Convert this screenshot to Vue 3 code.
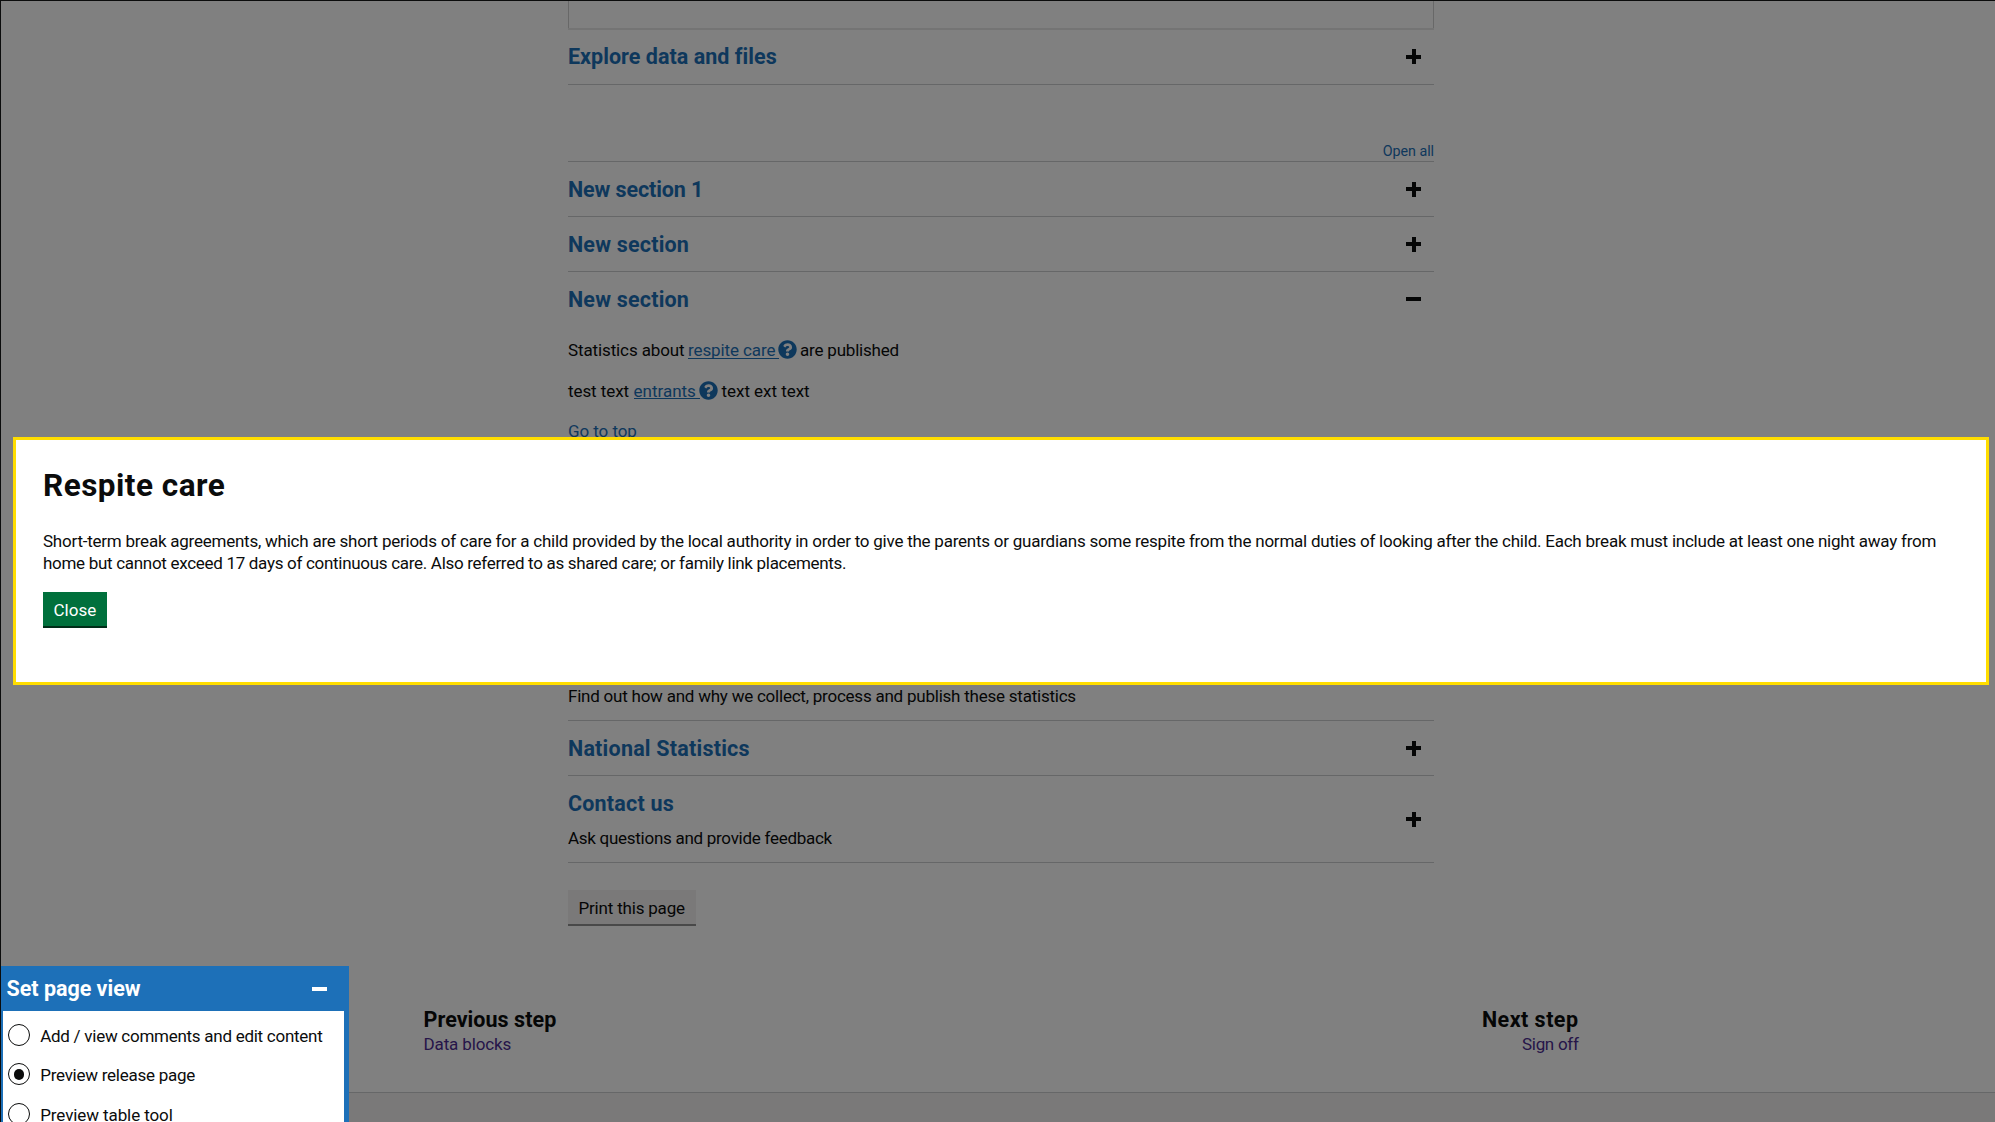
<script setup>
const views = [
  { label: 'Add / view comments and edit content', cls: 'edit', checked: false },
  { label: 'Preview release page', cls: 'release', checked: true },
  { label: 'Preview table tool', cls: 'table', checked: false },
]
</script>

<template>
  <div class="page">
    <main class="content">
      <div class="box"></div>

      <section class="row explore">
        <h2 class="ls-explore">Explore data and files</h2>
        <i class="icon plus"></i>
      </section>

      <a class="open-all">Open all</a>

      <section class="row">
        <h2 class="ls-one">New section 1</h2>
        <i class="icon plus"></i>
      </section>
      <section class="row">
        <h2 class="ls-section">New section</h2>
        <i class="icon plus"></i>
      </section>
      <section class="row">
        <h2 class="ls-section">New section</h2>
        <i class="icon"></i>
      </section>

      <div class="body">
        <p>
          <span class="ls-stats">Statistics about</span>
          <a class="term care">respite care</a>
          <svg class="help" viewBox="0 0 512 512"><path d="M504 256c0 137-111 248-248 248S8 393 8 256 119 8 256 8s248 111 248 248zM262.700 90c-54.500 0-89.300 23-116.500 63.800-3.500 5.300-2.400 12.400 2.700 16.300l34.700 26.300c5.200 3.900 12.600 3 16.700-2.100 17.900-22.700 30.100-35.800 57.300-35.800 20.400 0 45.700 13.100 45.700 33 0 15-12.400 22.700-32.500 34C247.100 238.500 216 254.900 216 296v4c0 6.600 5.400 12 12 12h56c6.600 0 12-5.400 12-12v-1.300c0-28.500 83.200-29.600 83.200-106.700 0-58-60.200-102-116.500-102zM256 338c-25.400 0-46 20.600-46 46s20.600 46 46 46 46-20.600 46-46-20.600-46-46-46z" /></svg>
          <span class="ls-published">are published</span>
        </p>
        <p>
          <span class="ls-test">test text</span>
          <a class="term entrants">entrants</a>
          <svg class="help" viewBox="0 0 512 512"><path d="M504 256c0 137-111 248-248 248S8 393 8 256 119 8 256 8s248 111 248 248zM262.700 90c-54.500 0-89.300 23-116.500 63.800-3.500 5.300-2.400 12.400 2.700 16.300l34.700 26.300c5.200 3.900 12.600 3 16.700-2.100 17.900-22.700 30.100-35.800 57.300-35.800 20.400 0 45.700 13.100 45.700 33 0 15-12.400 22.700-32.500 34C247.100 238.500 216 254.900 216 296v4c0 6.600 5.400 12 12 12h56c6.600 0 12-5.400 12-12v-1.300c0-28.500 83.200-29.600 83.200-106.700 0-58-60.200-102-116.500-102zM256 338c-25.400 0-46 20.600-46 46s20.600 46 46 46 46-20.600 46-46-20.600-46-46-46z" /></svg>
          <span class="ls-text">text ext text</span>
        </p>
        <a class="top">Go to top</a>
      </div>

      <p class="method">Find out how and why we collect, process and publish these statistics</p>

      <section class="row">
        <h2 class="ls-national">National Statistics</h2>
        <i class="icon plus"></i>
      </section>
      <section class="row contact">
        <div>
          <h2 class="ls-contact">Contact us</h2>
          <p class="ask">Ask questions and provide feedback</p>
        </div>
        <i class="icon plus"></i>
      </section>

      <button class="print">Print this page</button>
    </main>

    <nav class="steps">
      <div>
        <h3 class="ls-prev">Previous step</h3>
        <a class="ls-blocks">Data blocks</a>
      </div>
      <div class="next">
        <h3 class="ls-next">Next step</h3>
        <a class="ls-sign">Sign off</a>
      </div>
    </nav>
    <footer class="footer"></footer>

    <div class="overlay"></div>

    <div class="modal" role="dialog">
      <h1>Respite care</h1>
      <p>
        <span class="line1">Short-term break agreements, which are short periods of care for a child provided by the local authority in order to give the parents or guardians some respite from the normal duties of looking after the child. Each break must include at least one night away from</span>
        <span class="line2">home but cannot exceed 17 days of continuous care. Also referred to as shared care; or family link placements.</span>
      </p>
      <button class="close">Close</button>
    </div>

    <aside class="panel">
      <header>
        <h2>Set page view</h2>
        <i class="bar"></i>
      </header>
      <div class="options">
        <label v-for="v in views" :key="v.cls">
          <span class="radio" :class="{ checked: v.checked }"></span>
          <span :class="v.cls">{{ v.label }}</span>
        </label>
      </div>
    </aside>
  </div>
</template>

<style>
body {
  overflow: hidden;
}
</style>

<style scoped>
.page {
  position: relative;
  box-sizing: border-box;
  width: 1995px;
  height: 1122px;
  overflow: hidden;
  background: #fff;
  color: #0b0c0c;
  font: 400 17px/22.4px Roboto, 'Liberation Sans', sans-serif;
  display: flex;
  flex-direction: column;
}
h1, h2, h3, p {
  margin: 0;
}
h2, h3 {
  font-size: 21.5px;
  line-height: 24px;
  font-weight: 700;
  white-space: nowrap;
}
.content {
  flex: none;
  width: 866px;
  height: 1007px;
  margin-left: 568px;
  display: flex;
  flex-direction: column;
}
.box {
  flex: none;
  box-sizing: border-box;
  height: 28px;
  border: 1px solid #cfcfcf;
  border-width: 0 1px;
}
.row {
  flex: none;
  box-sizing: border-box;
  height: 55px;
  border-top: 1px solid #cbcdcf;
  padding: 15px 12px 0 0;
  display: flex;
  justify-content: space-between;
}
.row h2 {
  color: #1d70b8;
  margin-top: 1px;
}
.row.explore {
  height: 57px;
  border-top: 2px solid #e8e8e8;
  border-bottom: 1px solid #cbcdcf;
}
.row.explore h2 {
  margin-top: 0;
}
.icon {
  flex: none;
  position: relative;
  width: 17px;
  height: 17px;
  margin-top: 4px;
}
.explore .icon {
  margin-top: 3.500px;
}
.icon::before,
.icon.plus::after {
  content: '';
  position: absolute;
  left: 1px;
  top: 6px;
  width: 15px;
  height: 4px;
  background: #0b0c0c;
}
.icon.plus::after {
  left: 6.500px;
  top: 0.500px;
  width: 4px;
  height: 15px;
}
.open-all {
  align-self: flex-end;
  margin-top: 56px;
  height: 20px;
  font-size: 14.3px;
  line-height: 20px;
  letter-spacing: -0.05px;
  color: #1d70b8;
}
.body {
  flex: none;
  box-sizing: border-box;
  height: 359px;
  padding: 13.400px 0 0;
}
.body p {
  height: 22.400px;
  margin-bottom: 17.900px;
  display: flex;
}
.term {
  margin-left: 3.500px;
  color: #1d70b8;
  height: 19.500px;
  box-sizing: border-box;
  border-bottom: 1.500px solid #1d70b8;
  white-space: nowrap;
}
.care {
  width: 90.500px;
  letter-spacing: -0.100px;
}
.entrants {
  width: 66.500px;
  letter-spacing: 0;
}
.help {
  width: 19px;
  height: 19px;
  margin: 1px 3.500px 0 -1px;
  fill: #1d70b8;
}
.ls-stats { letter-spacing: -0.120px; width: 116.500px; white-space: nowrap; }
.ls-published { letter-spacing: -0.200px; }
.ls-test { letter-spacing: -0.080px; width: 62px; white-space: nowrap; }
.ls-text { letter-spacing: -0.040px; }
.top {
  color: #1d70b8;
  letter-spacing: -0.070px;
}
.method {
  flex: none;
  height: 35px;
  letter-spacing: -0.230px;
}
.contact {
  height: 88px;
  border-bottom: 1px solid #cbcdcf;
}
.contact .icon {
  margin-top: 20px;
}
.ask {
  margin-top: 10.500px;
  letter-spacing: -0.275px;
}
.ls-explore { letter-spacing: 0.030px; }
.ls-one { letter-spacing: -0.110px; }
.ls-section { letter-spacing: 0.200px; }
.ls-national { letter-spacing: 0.220px; }
.ls-contact { letter-spacing: 0.200px; }
button {
  display: block;
  border: 0;
  margin: 0;
  font: inherit;
  text-align: left;
  white-space: nowrap;
}
.print {
  flex: none;
  width: 128px;
  height: 36px;
  margin-top: 26.500px;
  padding: 0 0 0 10.500px;
  line-height: 36px;
  background: #f3f2f1;
  color: #0b0c0c;
  box-shadow: inset 0 -2px 0 #929191;
  letter-spacing: -0.190px;
}
.steps {
  flex: none;
  width: 1155px;
  margin-left: 423.500px;
  height: 85px;
  display: flex;
  justify-content: space-between;
}
.steps > div {
  display: flex;
  flex-direction: column;
  padding-top: 1px;
}
.steps h3 {
  height: 25px;
}
.steps a {
  color: #4c2c92;
}
.steps .next {
  align-items: flex-end;
}
.ls-prev { letter-spacing: 0.050px; }
.ls-next { letter-spacing: 0.460px; }
.ls-blocks { letter-spacing: -0.130px; }
.ls-sign { letter-spacing: -0.300px; }
.footer {
  flex: 1;
  border-top: 1px solid #cbcdcf;
  background: #f3f2f1;
}
.overlay {
  position: absolute;
  inset: 0;
  border: 1px solid #0b0c0c;
  border-width: 1px 0 0 1px;
  background: rgba(0, 0, 0, 0.498);
  background-clip: padding-box;
}
.modal {
  position: absolute;
  left: 13px;
  top: 437px;
  width: 1976px;
  height: 247.500px;
  box-sizing: border-box;
  border: 3px solid #ffdd00;
  background: #fff;
  padding: 28px 27px 0;
  display: flex;
  flex-direction: column;
  align-items: flex-start;
}
.modal h1 {
  font-size: 31.500px;
  line-height: 36px;
  letter-spacing: 0.480px;
  font-weight: 700;
}
.modal p {
  margin-top: 25.500px;
  display: flex;
  flex-direction: column;
  white-space: nowrap;
}
.line1 { letter-spacing: -0.237px; }
.line2 { letter-spacing: -0.300px; }
.close {
  width: 63.500px;
  height: 36.500px;
  margin-top: 17.500px;
  padding: 0 0 0 10.500px;
  line-height: 37px;
  background: #00703c;
  color: #fff;
  box-shadow: inset 0 -2px 0 #002d18;
}
.panel {
  position: absolute;
  left: 1px;
  top: 966px;
  width: 348px;
  height: 156px;
  box-sizing: border-box;
  padding: 0 5px 0 2px;
  background: #1d70b8;
  display: flex;
  flex-direction: column;
}
.panel header {
  flex: none;
  box-sizing: border-box;
  height: 45px;
  display: flex;
  align-items: flex-start;
  justify-content: space-between;
  padding: 11px 17px 0 3.500px;
  color: #fff;
}
.panel h2 {
  letter-spacing: -0.020px;
}
.bar {
  width: 15.500px;
  height: 4px;
  margin-top: 10px;
  background: #fff;
}
.options {
  flex: 1;
  background: #fff;
  overflow: hidden;
  padding: 13px 0 0 5px;
}
.options label {
  display: flex;
  height: 39.300px;
  line-height: 24px;
  white-space: nowrap;
}
.radio {
  flex: none;
  box-sizing: border-box;
  width: 22px;
  height: 22px;
  margin-right: 10.200px;
  border: 1.800px solid #0b0c0c;
  border-radius: 50%;
  display: flex;
  align-items: center;
  justify-content: center;
}
.radio.checked::after {
  content: '';
  width: 10.500px;
  height: 10.500px;
  border-radius: 50%;
  background: #0b0c0c;
}
.edit { letter-spacing: -0.267px; }
.release { letter-spacing: -0.261px; }
.table { letter-spacing: -0.095px; }
</style>
